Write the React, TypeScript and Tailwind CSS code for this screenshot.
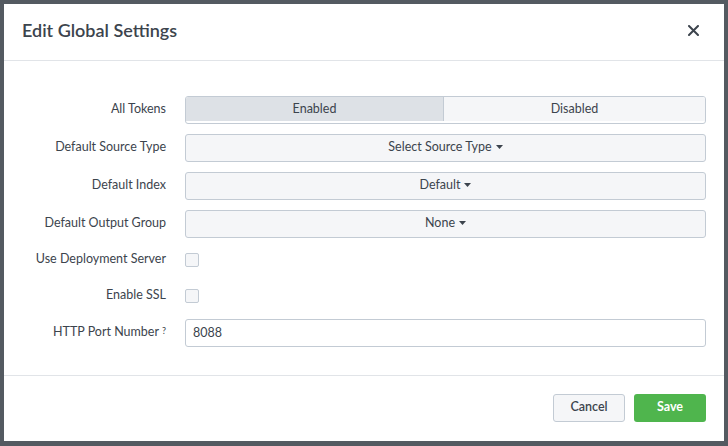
import React from 'react';

const Caret = () => (
    <svg width="7" height="4" viewBox="0 0 7 4" className="ml-[4px] inline-block" aria-hidden="true">
        <path d="M0 0h7L3.5 4z" fill="#3c444d" />
    </svg>
);

function Row({ label, children, className = '' }: { label: React.ReactNode; children: React.ReactNode; className?: string }) {
    return (
        <div className={`flex h-7 items-center ${className}`}>
            <div className="w-[162px] shrink-0 pb-[1px] text-right text-[12.5px] text-[#3c444d]">{label}</div>
            <div className="ml-[19px] flex h-full flex-1 items-center">{children}</div>
        </div>
    );
}

function Dropdown({ value }: { value: string }) {
    return (
        <button className="flex h-7 w-full items-center justify-center rounded-[3px] border border-[#c3cbd4] bg-[#f5f6f8] pb-[2px] text-[12.5px] text-[#3c444d]">
            {value}
            <Caret />
        </button>
    );
}

export default function App() {
    return (
        <div className="h-[446px] w-[728px] bg-[#545a61] p-[4px] font-['Lato',sans-serif]">
            <div className="flex h-[437px] w-[720px] flex-col bg-white">
                <div className="flex h-[57px] shrink-0 items-center justify-between border-b border-[#e1e4e8] pb-[3px] pl-[18px] pr-[25px]">
                    <h2 className="text-[18px] font-semibold text-[#3c444d]">Edit Global Settings</h2>
                    <svg width="11" height="11" viewBox="0 0 11 11" aria-hidden="true">
                        <path d="M1 1l9 9M10 1l-9 9" stroke="#3c444d" strokeWidth="2" strokeLinecap="round" />
                    </svg>
                </div>

                <div className="flex flex-1 flex-col pr-[18px] pt-[35px]">
                    <Row label="All Tokens">
                        <div className="flex h-7 w-full overflow-hidden rounded-[3px] border border-[#c3cbd4] pb-[2px] text-[12.5px] text-[#3c444d]">
                            <div className="flex w-[258px] items-center justify-center border-r border-[#c3cbd4] bg-[#dde1e6]">Enabled</div>
                            <div className="flex flex-1 items-center justify-center bg-[#f5f6f8]">Disabled</div>
                        </div>
                    </Row>
                    <Row label="Default Source Type" className="mt-[10px]">
                        <Dropdown value="Select Source Type" />
                    </Row>
                    <Row label="Default Index" className="mt-[10px]">
                        <Dropdown value="Default" />
                    </Row>
                    <Row label="Default Output Group" className="mt-[10px]">
                        <Dropdown value="None" />
                    </Row>
                    <Row label="Use Deployment Server" className="mt-[8px]">
                        <span className="h-[14px] w-[14px] rounded-[2px] border border-[#c3cbd4] bg-[#f5f6f8]" />
                    </Row>
                    <Row label="Enable SSL" className="mt-[8px]">
                        <span className="h-[14px] w-[14px] rounded-[2px] border border-[#c3cbd4] bg-[#f5f6f8]" />
                    </Row>
                    <Row
                        label={
                            <span>
                                HTTP Port Number<sup className="relative -top-[2px] ml-[3px] text-[9px]">?</sup>
                            </span>
                        }
                        className="mt-[9px]"
                    >
                        <input
                            defaultValue="8088"
                            className="h-7 w-full rounded-[3px] border border-[#c3cbd4] bg-white px-[7px] pb-[2px] text-[12.5px] text-[#3c444d] outline-none"
                        />
                    </Row>
                </div>

                <div className="flex h-[66px] shrink-0 items-center justify-end gap-[9px] border-t border-[#e1e4e8] pb-[2px] pr-[18px]">
                    <button className="h-7 w-[72px] rounded-[3px] border border-[#c3cbd4] bg-[#f5f6f8] text-[12.5px] font-semibold text-[#3c444d]">
                        Cancel
                    </button>
                    <button className="h-7 w-[72px] rounded-[3px] bg-[#4fb54d] text-[12.5px] font-bold text-white">Save</button>
                </div>
            </div>
        </div>
    );
}
